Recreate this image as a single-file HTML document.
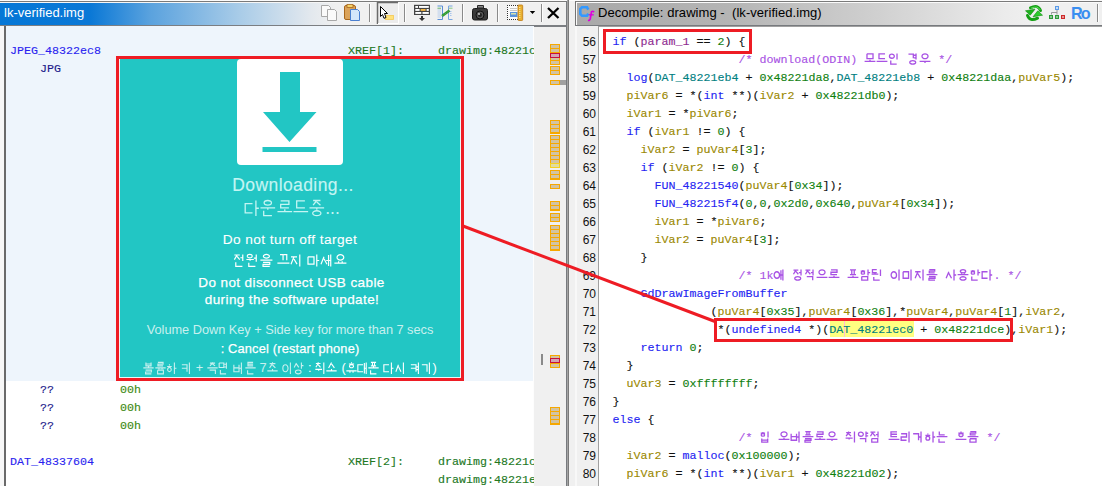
<!DOCTYPE html>
<html><head><meta charset="utf-8">
<style>
*{margin:0;padding:0;box-sizing:border-box}
html,body{width:1102px;height:486px;overflow:hidden;background:#f0f0f0;position:relative}
.a{position:absolute}
.m{font-family:"Liberation Mono",monospace;font-size:11.67px;line-height:18px;white-space:pre;-webkit-text-stroke:0.12px currentColor}
.s{font-family:"Liberation Sans",sans-serif}
.it{text-align:center;white-space:pre}
svg{display:block}
.kw{color:#2424f2}
.fn{color:#2424f2}
.vr{color:#9a8800}
.pm{color:#8e2a90}
.nm{color:#0f800f}
.gl{color:#00807f}
.cm{color:#a852e4}
</style></head><body>
<!-- LEFT PANEL -->
<div class="a" style="left:0;top:1px;width:567px;height:1px;background:#7a7a7a"></div>
<div class="a" style="left:0;top:0;width:1102px;height:1px;background:#fbfbfb"></div>
<div class="a" style="left:0;top:2px;width:566px;height:1px;background:#f6f6f6"></div>
<div class="a" style="left:0;top:3px;width:566px;height:22px;background:linear-gradient(to right,#0577d6 0px,#0a78d6 90px,#5aa2de 150px,#a9cce8 240px,#e2e8ee 310px,#f0f0f0 335px)"></div>
<div class="a" style="left:0;top:25px;width:567px;height:2px;background:#7b7e82"></div>
<div class="a s" style="left:4px;top:5px;font-size:13px;color:#fff;line-height:16px">lk-verified.img</div>
<svg class="a" style="left:310px;top:0" width="257" height="26" viewBox="310 0 257 26"><path d="M321.5 5.5 H328.5 L330.5 7.5 V16.5 H321.5 Z" fill="#fafafa" stroke="#a8a8a8"/><path d="M327.5 9.5 H334.5 L336.5 11.5 V20.5 H327.5 Z" fill="#fafafa" stroke="#a8a8a8"/><rect x="344.5" y="5.5" width="11" height="14" rx="1.5" fill="#dba35a" stroke="#a8671c"/><rect x="347" y="4.5" width="6" height="3" fill="#f6d36a" stroke="#a8671c" stroke-width="0.8"/><path d="M350.5 9.5 H357.5 L359.5 11.5 V20.5 H350.5 Z" fill="#d4e6fa" stroke="#4a7fd0"/><line x1="369.5" y1="4" x2="369.5" y2="22" stroke="#8a8a8a"/><line x1="370.5" y1="4" x2="370.5" y2="22" stroke="#fdfdfd"/><line x1="404.5" y1="4" x2="404.5" y2="22" stroke="#8a8a8a"/><line x1="405.5" y1="4" x2="405.5" y2="22" stroke="#fdfdfd"/><line x1="462.5" y1="4" x2="462.5" y2="22" stroke="#8a8a8a"/><line x1="463.5" y1="4" x2="463.5" y2="22" stroke="#fdfdfd"/><line x1="497.5" y1="4" x2="497.5" y2="22" stroke="#8a8a8a"/><line x1="498.5" y1="4" x2="498.5" y2="22" stroke="#fdfdfd"/><line x1="541.5" y1="4" x2="541.5" y2="22" stroke="#8a8a8a"/><line x1="542.5" y1="4" x2="542.5" y2="22" stroke="#fdfdfd"/><rect x="377" y="3" width="21" height="21" fill="#ececec"/><path d="M377.5 24 V2.5 H398" fill="none" stroke="#6a6a6a" stroke-width="1.5"/><path d="M378 23.5 H398.5 V3" fill="none" stroke="#ffffff"/><rect x="385.5" y="15.5" width="8" height="4" fill="#ffe27a" stroke="#f5c850" stroke-width="0.8"/><path d="M380.5 6.5 L387.5 13.5 L384.5 13.5 L386 17.5 L384 18.3 L382.5 14.5 L380.5 16.5 Z" fill="#fff" stroke="#000" stroke-width="1" stroke-linejoin="miter"/><rect x="414" y="4.8" width="16" height="10.2" fill="#444"/><rect x="415.3" y="6" width="2.7" height="1.9" fill="#fff"/><rect x="419" y="6" width="9.8" height="1.9" fill="#fff"/><rect x="415.3" y="9" width="4.3" height="1.9" fill="#fff"/><rect x="420.6" y="9" width="5" height="1.9" fill="#f7b844"/><rect x="426.6" y="9" width="2.2" height="1.9" fill="#fff"/><rect x="415.3" y="12" width="6" height="1.9" fill="#fff"/><rect x="422.5" y="12" width="6.3" height="1.9" fill="#fff"/><path d="M421 16 H423 V18 H425 L422 21 L419 18 H421 Z" fill="#333"/><path d="M437.5 6 H442.5 V19.5 H437.5" fill="none" stroke="#5b8fd6" stroke-width="1"/><path d="M452.5 6 H448.5 V19.5 H452.5" fill="none" stroke="#7aa6e0" stroke-width="1"/><line x1="437.5" y1="9" x2="441" y2="9" stroke="#a9c5ec" stroke-width="0.8"/><line x1="437.5" y1="11" x2="441" y2="11" stroke="#a9c5ec" stroke-width="0.8"/><line x1="437.5" y1="13" x2="441" y2="13" stroke="#a9c5ec" stroke-width="0.8"/><line x1="437.5" y1="15" x2="441" y2="15" stroke="#a9c5ec" stroke-width="0.8"/><line x1="437.5" y1="17" x2="441" y2="17" stroke="#a9c5ec" stroke-width="0.8"/><line x1="437.5" y1="8.2" x2="441" y2="8.2" stroke="#5fb55f" stroke-width="0.9"/><line x1="449" y1="8.2" x2="452.5" y2="8.2" stroke="#7cc47c" stroke-width="0.9"/><rect x="450" y="11" width="1.5" height="1" fill="#a9c5ec"/><rect x="450" y="13" width="1.5" height="1" fill="#a9c5ec"/><rect x="450" y="15" width="1.5" height="1" fill="#a9c5ec"/><line x1="442" y1="16" x2="449.5" y2="10.5" stroke="#2e962e" stroke-width="2.6"/><line x1="442" y1="16" x2="449.5" y2="10.5" stroke="#5cc05c" stroke-width="0.8" stroke-dasharray="1 1"/><rect x="472.5" y="8.5" width="15" height="11.5" rx="2" fill="#3a3a3a" stroke="#1a1a1a"/><rect x="477" y="5" width="7" height="4" rx="1" fill="#2a2a2a"/><rect x="478" y="6" width="5" height="1.5" fill="#8a8a8a"/><circle cx="480" cy="15" r="4" fill="#555" stroke="#111"/><circle cx="480" cy="15" r="2" fill="#222"/><circle cx="479" cy="14" r="0.9" fill="#ddd"/><rect x="507" y="5" width="11" height="15" fill="#fbfbfb"/><rect x="507" y="5" width="1" height="1" fill="#333"/><rect x="507" y="19" width="1" height="1" fill="#333"/><rect x="509" y="5" width="1" height="1" fill="#333"/><rect x="509" y="19" width="1" height="1" fill="#333"/><rect x="511" y="5" width="1" height="1" fill="#333"/><rect x="511" y="19" width="1" height="1" fill="#333"/><rect x="513" y="5" width="1" height="1" fill="#333"/><rect x="513" y="19" width="1" height="1" fill="#333"/><rect x="515" y="5" width="1" height="1" fill="#333"/><rect x="515" y="19" width="1" height="1" fill="#333"/><rect x="517" y="5" width="1" height="1" fill="#333"/><rect x="517" y="19" width="1" height="1" fill="#333"/><rect x="507" y="5" width="1" height="1" fill="#333"/><rect x="507" y="7" width="1" height="1" fill="#333"/><rect x="507" y="9" width="1" height="1" fill="#333"/><rect x="507" y="11" width="1" height="1" fill="#333"/><rect x="507" y="13" width="1" height="1" fill="#333"/><rect x="507" y="15" width="1" height="1" fill="#333"/><rect x="507" y="17" width="1" height="1" fill="#333"/><rect x="507" y="19" width="1" height="1" fill="#333"/><line x1="510" y1="8.5" x2="517" y2="8.5" stroke="#c8c8c8"/><line x1="510" y1="10.5" x2="517" y2="10.5" stroke="#c8c8c8"/><rect x="510" y="12" width="7.5" height="5" fill="#5a94dc"/><rect x="511" y="13" width="5" height="1.5" fill="#d8e4b0"/><rect x="518" y="5" width="4.7" height="15.5" rx="0.8" fill="#e8b030" stroke="#c07a10" stroke-width="0.8"/><rect x="519.3" y="7" width="1" height="1" fill="#fff3b0"/><rect x="519.3" y="9" width="1" height="1" fill="#fff3b0"/><rect x="519.3" y="11" width="1" height="1" fill="#fff3b0"/><rect x="519.3" y="13" width="1" height="1" fill="#fff3b0"/><rect x="519.3" y="15" width="1" height="1" fill="#fff3b0"/><rect x="519.3" y="17" width="1" height="1" fill="#fff3b0"/><path d="M529.8 11 H535.2 L532.5 14 Z" fill="#000"/><path d="M548 8 L558.5 18 M558.5 8 L548 18" stroke="#000" stroke-width="2.3"/></svg>

<div class="a" style="left:0;top:26px;width:4px;height:460px;background:#f7f7f7"></div>
<div class="a" style="left:4px;top:26px;width:2px;height:460px;background:#6a6a6a"></div>
<div class="a" style="left:6px;top:26px;width:528px;height:460px;background:#fff"></div>
<div class="a" style="left:6px;top:26px;width:528px;height:355px;background:#eef5fc"></div>
<div class="a" style="left:533px;top:27px;width:1px;height:459px;background:#fdfdfd"></div>
<div class="a" style="left:534px;top:27px;width:32px;height:459px;background:#f0f0f0"></div>
<div class="a" style="left:566px;top:1px;width:1px;height:485px;background:#777a7e"></div>
<div class="a" style="left:567px;top:0;width:1px;height:486px;background:#a4a4a4"></div>
<div class="a" style="left:568px;top:0;width:1px;height:486px;background:#7a7a7a"></div>
<div class="a" style="left:550px;top:44px;width:10px;height:21px;background:#f6a800"></div><div class="a" style="left:551px;top:45px;width:8px;height:3px;background:#d3c4a2"></div><div class="a" style="left:551px;top:49px;width:8px;height:3px;background:#d3c4a2"></div><div class="a" style="left:551px;top:53px;width:8px;height:3px;background:#d3c4a2"></div><div class="a" style="left:551px;top:57px;width:8px;height:3px;background:#d3c4a2"></div><div class="a" style="left:551px;top:61px;width:8px;height:3px;background:#d3c4a2"></div><div class="a" style="left:550px;top:66px;width:10px;height:9px;background:#f6a800"></div><div class="a" style="left:551px;top:67px;width:8px;height:3px;background:#d3c4a2"></div><div class="a" style="left:551px;top:71px;width:8px;height:3px;background:#d3c4a2"></div><div class="a" style="left:550px;top:80px;width:10px;height:5px;background:#f6a800"></div><div class="a" style="left:551px;top:81px;width:8px;height:3px;background:#d3c4a2"></div><div class="a" style="left:550px;top:120px;width:10px;height:14px;background:#f6a800"></div><div class="a" style="left:551px;top:121px;width:8px;height:3px;background:#d3c4a2"></div><div class="a" style="left:551px;top:125px;width:8px;height:3px;background:#d3c4a2"></div><div class="a" style="left:551px;top:129px;width:8px;height:3px;background:#d3c4a2"></div><div class="a" style="left:550px;top:135px;width:10px;height:33px;background:#f6a800"></div><div class="a" style="left:551px;top:136px;width:8px;height:3px;background:#d3c4a2"></div><div class="a" style="left:551px;top:140px;width:8px;height:3px;background:#d3c4a2"></div><div class="a" style="left:551px;top:144px;width:8px;height:3px;background:#d3c4a2"></div><div class="a" style="left:551px;top:148px;width:8px;height:3px;background:#d3c4a2"></div><div class="a" style="left:551px;top:152px;width:8px;height:3px;background:#d3c4a2"></div><div class="a" style="left:551px;top:156px;width:8px;height:3px;background:#d3c4a2"></div><div class="a" style="left:551px;top:160px;width:8px;height:3px;background:#d3c4a2"></div><div class="a" style="left:551px;top:164px;width:8px;height:3px;background:#d3c4a2"></div><div class="a" style="left:550px;top:170px;width:10px;height:10px;background:#f6a800"></div><div class="a" style="left:551px;top:171px;width:8px;height:3px;background:#d3c4a2"></div><div class="a" style="left:551px;top:175px;width:8px;height:3px;background:#d3c4a2"></div><div class="a" style="left:550px;top:184px;width:10px;height:5px;background:#f6a800"></div><div class="a" style="left:551px;top:185px;width:8px;height:3px;background:#d3c4a2"></div><div class="a" style="left:550px;top:201px;width:10px;height:10px;background:#f6a800"></div><div class="a" style="left:551px;top:202px;width:8px;height:3px;background:#d3c4a2"></div><div class="a" style="left:551px;top:206px;width:8px;height:3px;background:#d3c4a2"></div><div class="a" style="left:550px;top:213px;width:10px;height:9px;background:#f6a800"></div><div class="a" style="left:551px;top:214px;width:8px;height:3px;background:#d3c4a2"></div><div class="a" style="left:551px;top:218px;width:8px;height:3px;background:#d3c4a2"></div><div class="a" style="left:550px;top:225px;width:10px;height:26px;background:#f6a800"></div><div class="a" style="left:551px;top:226px;width:8px;height:3px;background:#d3c4a2"></div><div class="a" style="left:551px;top:230px;width:8px;height:3px;background:#d3c4a2"></div><div class="a" style="left:551px;top:234px;width:8px;height:3px;background:#d3c4a2"></div><div class="a" style="left:551px;top:238px;width:8px;height:3px;background:#d3c4a2"></div><div class="a" style="left:551px;top:242px;width:8px;height:3px;background:#d3c4a2"></div><div class="a" style="left:551px;top:246px;width:8px;height:3px;background:#d3c4a2"></div><div class="a" style="left:550px;top:355px;width:10px;height:13px;background:#f6a800"></div><div class="a" style="left:551px;top:356px;width:8px;height:3px;background:#d3c4a2"></div><div class="a" style="left:551px;top:360px;width:8px;height:3px;background:#d3c4a2"></div><div class="a" style="left:551px;top:364px;width:8px;height:3px;background:#d3c4a2"></div><div class="a" style="left:550px;top:407px;width:10px;height:18px;background:#f6a800"></div><div class="a" style="left:551px;top:408px;width:8px;height:3px;background:#d3c4a2"></div><div class="a" style="left:551px;top:412px;width:8px;height:3px;background:#d3c4a2"></div><div class="a" style="left:551px;top:416px;width:8px;height:3px;background:#d3c4a2"></div><div class="a" style="left:551px;top:420px;width:8px;height:3px;background:#d3c4a2"></div><div class="a" style="left:550px;top:53px;width:10px;height:5px;background:#c8103c"></div><div class="a" style="left:551px;top:54px;width:8px;height:3px;background:#d4a4b4"></div><div class="a" style="left:550px;top:358px;width:10px;height:5px;background:#c8103c"></div><div class="a" style="left:551px;top:359px;width:8px;height:3px;background:#d4a4b4"></div><div class="a" style="left:550px;top:163px;width:10px;height:5px;background:#f5d020"></div><div class="a" style="left:551px;top:164px;width:8px;height:3px;background:#e0dca0"></div><div class="a" style="left:560px;top:80px;width:6px;height:5px;background:#a0a0a0"></div><div class="a" style="left:541px;top:354px;width:2px;height:11px;background:#8a8a8a"></div>
<div class="a m" style="left:10px;top:42px;color:#2a1ff0">JPEG_48322ec8</div>
<div class="a m" style="left:40px;top:60px;color:#1a1a8a">JPG</div>
<div class="a m" style="left:348px;top:42px;color:#22781e">XREF[1]:</div>
<div class="a m" style="left:438px;top:42px;width:96px;overflow:hidden;color:#22781e">drawimg:48221c</div>
<div class="a m" style="left:40px;top:381px;color:#1a1a8a">??</div>
<div class="a m" style="left:40px;top:399px;color:#1a1a8a">??</div>
<div class="a m" style="left:40px;top:417px;color:#1a1a8a">??</div>
<div class="a m" style="left:120px;top:381px;color:#3c8a10">00h</div>
<div class="a m" style="left:120px;top:399px;color:#3c8a10">00h</div>
<div class="a m" style="left:120px;top:417px;color:#3c8a10">00h</div>
<div class="a m" style="left:10px;top:453px;color:#2a1ff0">DAT_48337604</div>
<div class="a m" style="left:348px;top:453px;color:#22781e">XREF[2]:</div>
<div class="a m" style="left:438px;top:453px;width:96px;overflow:hidden;color:#22781e">drawimg:48221c</div>
<div class="a m" style="left:438px;top:471px;width:96px;overflow:hidden;color:#22781e">drawimg:48221e</div>
<!-- IMAGE -->
<div class="a" style="left:116px;top:56px;width:348px;height:325px;background:#ee1c24"></div>
<div class="a" style="left:119px;top:59px;width:342px;height:319px;background:#e8f6f6"></div>
<div class="a" style="left:120px;top:59px;width:340px;height:318px;background:#22c6c4"></div>
<div class="a" style="left:237px;top:59px;width:106px;height:106px;background:#fff;border-radius:4px"></div>
<svg class="a" style="left:237px;top:59px" width="106" height="106" viewBox="0 0 106 106">
<path d="M43 13 H63 V53 H79.5 L52.5 83 L26 53 H43 Z" fill="#22c6c4"/>
<rect x="25.5" y="88" width="54" height="5" fill="#22c6c4"/>
</svg>
<div class="a s it" style="left:123px;top:175px;width:340px;font-size:17.5px;line-height:20px;color:#c4f5f3;letter-spacing:0.4px;-webkit-text-stroke:0.15px #c4f5f3">Downloading...</div>
<div class="a s it" style="left:122px;top:198px;width:340px;font-size:17.5px;line-height:20px;color:#c4f5f3;letter-spacing:0px"><svg width="15.6" height="16.5" style="display:inline-block;vertical-align:-2.5px;overflow:visible"><path d="M8.53 3.60 L1.20 3.60 L1.20 12.90 L8.53 12.90 M11.91 0.49 L11.91 16.00 M11.91 8.25 L14.84 8.25" fill="none" stroke="#c4f5f3" stroke-width="1.3"/></svg><span style="display:inline-block;width:0.6px"></span><svg width="15.6" height="16.5" style="display:inline-block;vertical-align:-2.5px;overflow:visible"><path d="M4.13 2.82 A3.67 2.33 0 1 0 11.47 2.82 A3.67 2.33 0 1 0 4.13 2.82 M0.47 7.78 L15.13 7.78 M7.80 7.78 L7.80 9.65 M3.69 10.73 L3.69 15.69 L11.91 15.69" fill="none" stroke="#c4f5f3" stroke-width="1.3"/></svg><span style="display:inline-block;width:0.6px"></span><svg width="15.6" height="16.5" style="display:inline-block;vertical-align:-2.5px;overflow:visible"><path d="M3.69 0.81 L11.91 0.81 L11.91 4.29 L3.69 4.29 L3.69 7.78 L11.91 7.78 M0.47 11.66 L15.13 11.66 M7.80 9.18 L7.80 11.66" fill="none" stroke="#c4f5f3" stroke-width="1.3"/></svg><span style="display:inline-block;width:0.6px"></span><svg width="15.6" height="16.5" style="display:inline-block;vertical-align:-2.5px;overflow:visible"><path d="M11.91 0.81 L3.69 0.81 L3.69 7.78 L11.91 7.78 M0.47 11.66 L15.13 11.66" fill="none" stroke="#c4f5f3" stroke-width="1.3"/></svg><span style="display:inline-block;width:0.6px"></span><svg width="15.6" height="16.5" style="display:inline-block;vertical-align:-2.5px;overflow:visible"><path d="M4.13 0.49 L11.47 0.49 M7.80 0.49 L4.13 5.15 M7.80 1.89 L11.47 5.15 M0.47 7.78 L15.13 7.78 M7.80 7.78 L7.80 9.65 M3.69 13.21 A4.11 2.48 0 1 0 11.91 13.21 A4.11 2.48 0 1 0 3.69 13.21" fill="none" stroke="#c4f5f3" stroke-width="1.3"/></svg><span style="display:inline-block;width:0.6px"></span>...</div>
<div class="a s it" style="left:120px;top:231px;width:340px;font-size:13.7px;line-height:17px;color:#ffffff;letter-spacing:0.42px;-webkit-text-stroke:0.1px #fff">Do not turn off target</div>
<div class="a s it" style="left:120px;top:251px;width:340px;font-size:13.7px;line-height:17px;color:#ffffff;letter-spacing:0px"><svg width="12.8" height="13" style="display:inline-block;vertical-align:-2.5px;overflow:visible"><path d="M1.35 1.00 L6.76 1.00 M4.05 1.00 L1.35 5.64 M4.05 2.39 L6.76 5.64 M9.77 0.39 L9.77 7.11 M7.36 3.75 L9.77 3.75 M2.79 8.33 L2.79 12.37 L9.41 12.37" fill="none" stroke="#ffffff" stroke-width="1.2"/></svg><span style="display:inline-block;width:0.5px"></span><svg width="12.8" height="13" style="display:inline-block;vertical-align:-2.5px;overflow:visible"><path d="M1.35 2.10 A2.41 1.71 0 1 0 6.16 2.10 A2.41 1.71 0 1 0 1.35 2.10 M0.38 5.52 L7.84 5.52 M4.11 5.52 L4.11 6.74 M10.25 0.39 L10.25 7.72 M7.84 4.06 L10.25 4.06 M2.79 8.70 L2.79 12.37 L9.41 12.37" fill="none" stroke="#ffffff" stroke-width="1.2"/></svg><span style="display:inline-block;width:0.5px"></span><svg width="12.8" height="13" style="display:inline-block;vertical-align:-2.5px;overflow:visible"><path d="M3.39 2.22 A3.01 1.83 0 1 0 9.41 2.22 A3.01 1.83 0 1 0 3.39 2.22 M0.38 6.13 L12.42 6.13 M3.03 8.46 L9.77 8.46 L9.77 10.41 L3.03 10.41 L3.03 12.37 L9.77 12.37" fill="none" stroke="#ffffff" stroke-width="1.2"/></svg><span style="display:inline-block;width:0.5px"></span> <svg width="12.8" height="13" style="display:inline-block;vertical-align:-2.5px;overflow:visible"><path d="M3.03 0.63 L6.06 0.63 L6.06 6.13 M6.74 0.63 L9.77 0.63 L9.77 6.13 M0.38 9.19 L12.42 9.19" fill="none" stroke="#ffffff" stroke-width="1.2"/></svg><span style="display:inline-block;width:0.5px"></span><svg width="12.8" height="13" style="display:inline-block;vertical-align:-2.5px;overflow:visible"><path d="M0.99 2.83 L7.00 2.83 M3.99 2.83 L0.99 10.17 M3.99 5.03 L7.00 10.17 M9.77 0.39 L9.77 12.61" fill="none" stroke="#ffffff" stroke-width="1.2"/></svg><span style="display:inline-block;width:0.5px"></span> <svg width="12.8" height="13" style="display:inline-block;vertical-align:-2.5px;overflow:visible"><path d="M0.99 2.83 L7.00 2.83 L7.00 10.17 L0.99 10.17 L0.99 2.83 M9.77 0.39 L9.77 12.61 M9.77 6.50 L12.18 6.50" fill="none" stroke="#ffffff" stroke-width="1.2"/></svg><span style="display:inline-block;width:0.5px"></span><svg width="12.8" height="13" style="display:inline-block;vertical-align:-2.5px;overflow:visible"><path d="M3.99 2.83 L0.99 10.17 M3.99 4.67 L7.00 10.17 M8.57 1.00 L8.57 12.00 M10.73 0.39 L10.73 12.61 M6.16 6.50 L8.57 6.50 M8.57 6.50 L10.73 6.50" fill="none" stroke="#ffffff" stroke-width="1.2"/></svg><span style="display:inline-block;width:0.5px"></span><svg width="12.8" height="13" style="display:inline-block;vertical-align:-2.5px;overflow:visible"><path d="M3.03 3.38 A3.37 2.75 0 1 0 9.77 3.38 A3.37 2.75 0 1 0 3.03 3.38 M0.38 9.19 L12.42 9.19 M4.60 7.23 L4.60 9.19 M8.20 7.23 L8.20 9.19" fill="none" stroke="#ffffff" stroke-width="1.2"/></svg><span style="display:inline-block;width:0.5px"></span></div>
<div class="a s it" style="left:121.5px;top:274px;width:340px;font-size:13.5px;line-height:17px;color:#ffffff;letter-spacing:0.4px;-webkit-text-stroke:0.25px #fff">Do not disconnect USB cable</div>
<div class="a s it" style="left:122px;top:291px;width:340px;font-size:13.5px;line-height:17px;color:#ffffff;letter-spacing:0.4px;-webkit-text-stroke:0.25px #fff">during the software update!</div>
<div class="a s it" style="left:120px;top:321px;width:340px;font-size:12.8px;line-height:17px;color:#c8f0ef;letter-spacing:-0.04px">Volume Down Key + Side key for more than 7 secs</div>
<div class="a s it" style="left:120px;top:340px;width:340px;font-size:12.8px;line-height:17px;color:#ffffff;letter-spacing:0.18px;-webkit-text-stroke:0.25px #fff">: Cancel (restart phone)</div>
<div class="a s it" style="left:120px;top:359px;width:340px;font-size:12.8px;line-height:17px;color:#ffffff;letter-spacing:0px"><span style="color:#c8f0ef"><svg width="11" height="12.5" style="display:inline-block;vertical-align:-2.5px;overflow:visible"><path d="M2.92 0.38 L2.92 3.90 L8.08 3.90 L8.08 0.38 M2.92 1.96 L8.08 1.96 M0.33 5.90 L10.67 5.90 M5.50 4.49 L5.50 5.90 M2.60 8.13 L8.40 8.13 L8.40 10.01 L2.60 10.01 L2.60 11.89 L8.40 11.89" fill="none" stroke="#c8f0ef" stroke-width="1.1"/></svg><span style="display:inline-block;width:0.4px"></span><svg width="11" height="12.5" style="display:inline-block;vertical-align:-2.5px;overflow:visible"><path d="M2.92 0.38 L8.08 0.38 L8.08 2.14 L2.92 2.14 L2.92 3.90 L8.08 3.90 M0.33 5.90 L10.67 5.90 M3.95 5.90 L3.95 7.31 M7.05 5.90 L7.05 7.31 M2.60 8.13 L8.40 8.13 L8.40 11.89 L2.60 11.89 L2.60 8.13" fill="none" stroke="#c8f0ef" stroke-width="1.1"/></svg><span style="display:inline-block;width:0.4px"></span><svg width="11" height="12.5" style="display:inline-block;vertical-align:-2.5px;overflow:visible"><path d="M3.43 2.37 L3.43 3.57 M1.11 4.49 L5.76 4.49 M1.62 7.52 A1.81 2.11 0 1 0 5.24 7.52 A1.81 2.11 0 1 0 1.62 7.52 M8.40 0.38 L8.40 12.12 M8.40 6.25 L10.46 6.25" fill="none" stroke="#c8f0ef" stroke-width="1.1"/></svg><span style="display:inline-block;width:0.4px"></span> <svg width="11" height="12.5" style="display:inline-block;vertical-align:-2.5px;overflow:visible"><path d="M0.85 2.73 L6.02 2.73 L6.02 9.78 M0.85 6.25 L6.02 6.25 M8.40 0.38 L8.40 12.12" fill="none" stroke="#c8f0ef" stroke-width="1.1"/></svg><span style="display:inline-block;width:0.4px"></span> + <svg width="11" height="12.5" style="display:inline-block;vertical-align:-2.5px;overflow:visible"><path d="M5.50 0.20 L5.50 0.80 M2.92 1.08 L8.08 1.08 M5.50 1.08 L2.92 3.90 M5.50 1.96 L8.08 3.90 M0.33 5.90 L10.67 5.90 M2.60 8.13 L8.40 8.13 L8.40 11.89" fill="none" stroke="#c8f0ef" stroke-width="1.1"/></svg><span style="display:inline-block;width:0.4px"></span><svg width="11" height="12.5" style="display:inline-block;vertical-align:-2.5px;overflow:visible"><path d="M1.16 0.96 L5.81 0.96 L5.81 5.43 L1.16 5.43 L1.16 0.96 M8.40 0.38 L8.40 6.84 M6.33 2.20 L8.40 2.20 M6.33 5.02 L8.40 5.02 M2.40 8.01 L2.40 11.89 L8.08 11.89" fill="none" stroke="#c8f0ef" stroke-width="1.1"/></svg><span style="display:inline-block;width:0.4px"></span> <svg width="11" height="12.5" style="display:inline-block;vertical-align:-2.5px;overflow:visible"><path d="M0.85 2.73 L0.85 9.78 L6.02 9.78 L6.02 2.73 M0.85 5.90 L6.02 5.90 M8.40 0.38 L8.40 12.12 M6.33 6.25 L8.40 6.25" fill="none" stroke="#c8f0ef" stroke-width="1.1"/></svg><span style="display:inline-block;width:0.4px"></span><svg width="11" height="12.5" style="display:inline-block;vertical-align:-2.5px;overflow:visible"><path d="M8.08 0.38 L2.92 0.38 L2.92 3.90 L8.08 3.90 M2.92 2.14 L8.08 2.14 M0.33 5.90 L10.67 5.90 M2.60 8.13 L2.60 11.89 L8.40 11.89" fill="none" stroke="#c8f0ef" stroke-width="1.1"/></svg><span style="display:inline-block;width:0.4px"></span> 7<svg width="11" height="12.5" style="display:inline-block;vertical-align:-2.5px;overflow:visible"><path d="M5.50 0.35 L5.50 1.24 M2.60 1.67 L8.40 1.67 M5.50 1.67 L2.60 5.90 M5.50 2.99 L8.40 5.90 M0.33 8.83 L10.67 8.83 M5.50 6.95 L5.50 8.83" fill="none" stroke="#c8f0ef" stroke-width="1.1"/></svg><span style="display:inline-block;width:0.4px"></span> <svg width="11" height="12.5" style="display:inline-block;vertical-align:-2.5px;overflow:visible"><path d="M0.85 6.25 A2.58 3.52 0 1 0 6.02 6.25 A2.58 3.52 0 1 0 0.85 6.25 M8.40 0.38 L8.40 12.12" fill="none" stroke="#c8f0ef" stroke-width="1.1"/></svg><span style="display:inline-block;width:0.4px"></span><svg width="11" height="12.5" style="display:inline-block;vertical-align:-2.5px;overflow:visible"><path d="M3.48 0.96 L1.16 5.43 M3.48 2.08 L5.81 5.43 M8.40 0.38 L8.40 6.84 M8.40 3.61 L10.46 3.61 M2.40 9.95 A2.84 1.94 0 1 0 8.09 9.95 A2.84 1.94 0 1 0 2.40 9.95" fill="none" stroke="#c8f0ef" stroke-width="1.1"/></svg><span style="display:inline-block;width:0.4px"></span></span> : <svg width="11" height="12.5" style="display:inline-block;vertical-align:-2.5px;overflow:visible"><path d="M3.17 0.37 L3.17 1.17 M0.85 1.55 L5.50 1.55 M3.17 1.55 L0.85 5.31 M3.17 2.73 L5.50 5.31 M0.33 7.42 L7.05 7.42 M3.69 7.42 L3.69 8.83 M8.81 0.38 L8.81 12.12" fill="none" stroke="#ffffff" stroke-width="1.1"/></svg><span style="display:inline-block;width:0.4px"></span><svg width="11" height="12.5" style="display:inline-block;vertical-align:-2.5px;overflow:visible"><path d="M5.50 0.61 L2.60 5.90 M5.50 1.93 L8.40 5.90 M0.33 8.83 L10.67 8.83 M5.50 6.95 L5.50 8.83" fill="none" stroke="#ffffff" stroke-width="1.1"/></svg><span style="display:inline-block;width:0.4px"></span> (<svg width="11" height="12.5" style="display:inline-block;vertical-align:-2.5px;overflow:visible"><path d="M5.50 0.35 L5.50 1.24 M2.89 1.93 L8.11 1.93 M3.47 4.21 A2.03 1.59 0 1 0 7.53 4.21 A2.03 1.59 0 1 0 3.47 4.21 M0.33 8.83 L10.67 8.83 M3.95 8.83 L3.95 10.71 M7.05 8.83 L7.05 10.71" fill="none" stroke="#ffffff" stroke-width="1.1"/></svg><span style="display:inline-block;width:0.4px"></span><svg width="11" height="12.5" style="display:inline-block;vertical-align:-2.5px;overflow:visible"><path d="M6.02 2.73 L0.85 2.73 L0.85 9.78 L6.02 9.78 M7.36 0.96 L7.36 11.54 M9.22 0.38 L9.22 12.12 M7.36 6.25 L9.22 6.25" fill="none" stroke="#ffffff" stroke-width="1.1"/></svg><span style="display:inline-block;width:0.4px"></span><svg width="11" height="12.5" style="display:inline-block;vertical-align:-2.5px;overflow:visible"><path d="M2.92 0.38 L8.08 0.38 M4.47 0.38 L4.47 3.90 M6.53 0.38 L6.53 3.90 M2.92 3.90 L8.08 3.90 M0.33 5.90 L10.67 5.90 M5.50 4.49 L5.50 5.90 M2.60 8.13 L2.60 11.89 L8.40 11.89" fill="none" stroke="#ffffff" stroke-width="1.1"/></svg><span style="display:inline-block;width:0.4px"></span> <svg width="11" height="12.5" style="display:inline-block;vertical-align:-2.5px;overflow:visible"><path d="M6.02 2.73 L0.85 2.73 L0.85 9.78 L6.02 9.78 M8.40 0.38 L8.40 12.12 M8.40 6.25 L10.46 6.25" fill="none" stroke="#ffffff" stroke-width="1.1"/></svg><span style="display:inline-block;width:0.4px"></span><svg width="11" height="12.5" style="display:inline-block;vertical-align:-2.5px;overflow:visible"><path d="M3.43 2.73 L0.85 9.78 M3.43 4.49 L6.02 9.78 M8.40 0.38 L8.40 12.12" fill="none" stroke="#ffffff" stroke-width="1.1"/></svg><span style="display:inline-block;width:0.4px"></span> <svg width="11" height="12.5" style="display:inline-block;vertical-align:-2.5px;overflow:visible"><path d="M0.85 2.73 L6.02 2.73 L6.02 9.78 M0.85 6.25 L6.02 6.25 M8.40 0.38 L8.40 12.12 M6.33 4.84 L8.40 4.84 M6.33 7.66 L8.40 7.66" fill="none" stroke="#ffffff" stroke-width="1.1"/></svg><span style="display:inline-block;width:0.4px"></span><svg width="11" height="12.5" style="display:inline-block;vertical-align:-2.5px;overflow:visible"><path d="M0.85 2.73 L6.02 2.73 L6.02 9.78 M8.40 0.38 L8.40 12.12" fill="none" stroke="#ffffff" stroke-width="1.1"/></svg><span style="display:inline-block;width:0.4px"></span>)</div>

<!-- RIGHT PANEL -->
<div class="a" style="left:575px;top:1px;width:527px;height:1px;background:#7a7a7a"></div>
<div class="a" style="left:575px;top:1px;width:1px;height:25px;background:#747474"></div>
<div class="a" style="left:576px;top:2px;width:526px;height:1px;background:#fafafa"></div>
<div class="a" style="left:576px;top:2px;width:1px;height:23px;background:#fafafa"></div>
<div class="a" style="left:577px;top:3px;width:525px;height:22px;background:linear-gradient(to right,#a9a9a9 0px,#b4b4b4 150px,#d0d0d0 300px,#ececec 430px,#f0f0f0 460px)"></div>
<div class="a" style="left:575px;top:25px;width:527px;height:1px;background:#777a7e"></div>
<div class="a s" style="left:598px;top:5px;font-size:13px;color:#000;line-height:16px;letter-spacing:0.05px">Decompile: drawimg -&nbsp; (lk-verified.img)</div>
<svg class="a" style="left:576px;top:0" width="526" height="26" viewBox="576 0 526 26"><path d="M588.3 9.6 L587 7.3 H582 L580.3 9 V14 L582 15.8 H587 L588.3 13.6" fill="none" stroke="#3399ff" stroke-width="2.6"/><path d="M594 12.3 Q593 10.6 591.6 11.6 L590.2 19 Q589.6 20.8 588 20.2" fill="none" stroke="#dd00dd" stroke-width="1.7"/><line x1="588.8" y1="14.8" x2="593.8" y2="14.8" stroke="#dd00dd" stroke-width="1.3"/><path d="M1040.5 10.5 Q1038 4 1030.5 7.8" fill="none" stroke="#16a016" stroke-width="3" stroke-linecap="round"/><path d="M1040.2 10 Q1037.8 5.2 1031 8.2" fill="none" stroke="#5ee05e" stroke-width="1"/><path d="M1025.5 10.8 L1035 9.2 L1030.2 15.2 Z" fill="#1eb41e" stroke="#0e8a0e" stroke-width="0.6" stroke-linejoin="round"/><path d="M1027.5 15.5 Q1030 22 1037.5 18.2" fill="none" stroke="#16a016" stroke-width="3" stroke-linecap="round"/><path d="M1042.5 15.2 L1033 16.8 L1037.8 10.8 Z" fill="#2ccc2c" stroke="#0e8a0e" stroke-width="0.6" stroke-linejoin="round"/><path d="M1057 10 V14.5 M1051.5 14.5 V12.5 H1057" fill="none" stroke="#9a9a9a" stroke-width="1"/><rect x="1055" y="6" width="4" height="4" fill="#5a9ae6"/><rect x="1056" y="7" width="2" height="2" fill="#c8dcf6"/><rect x="1049" y="15" width="4" height="4" fill="#2f9a3a"/><rect x="1050" y="16" width="2" height="2" fill="#88c890"/><rect x="1055" y="15" width="4" height="4" fill="#2f9a3a"/><rect x="1056" y="16" width="2" height="2" fill="#88c890"/><rect x="1061" y="15" width="4" height="4" fill="#cc2a2a"/><rect x="1062" y="16" width="2" height="2" fill="#e89090"/><line x1="1097.5" y1="4" x2="1097.5" y2="22" stroke="#8a8a8a"/><line x1="1098.5" y1="4" x2="1098.5" y2="22" stroke="#fdfdfd"/></svg>
<div class="a s" style="left:1071px;top:3px;font-size:16.2px;line-height:20px;font-weight:bold;color:#3a8ef0;letter-spacing:-1.9px">Ro</div>

<div class="a" style="left:575px;top:26px;width:2px;height:460px;background:#f8f8f8"></div>
<div class="a" style="left:577px;top:26px;width:21px;height:460px;background:#f0f0f0"></div>
<div class="a" style="left:598px;top:26px;width:1px;height:460px;background:#a0a0a0"></div>
<div class="a" style="left:599px;top:26px;width:503px;height:460px;background:#fff"></div>
<div class="a" style="left:598px;top:26px;width:504px;height:1px;background:#a0a0a0"></div>
<div class="a" style="left:830px;top:321px;width:84px;height:16px;background:#ffff80"></div>
<div class="a" style="left:844px;top:321px;width:1px;height:16px;background:#ffc0d0"></div>
<div class="a s" id="nums" style="left:576px;top:33px;width:20px;text-align:right;font-size:12px;line-height:18px;color:#111"><div>56</div><div>57</div><div>58</div><div>59</div><div>60</div><div>61</div><div>62</div><div>63</div><div>64</div><div>65</div><div>66</div><div>67</div><div>68</div><div>69</div><div>70</div><div>71</div><div>72</div><div>73</div><div>74</div><div>75</div><div>76</div><div>77</div><div>78</div><div>79</div><div>80</div></div>
<div class="a m" id="code" style="left:598.5px;top:33px;color:#111"><div>  <span class="kw">if</span> (<span class="pm">param_1</span> == <span class="nm">2</span>) {</div><div>                    <span class="cm">/* download(ODIN) <svg width="12" height="12" style="display:inline-block;vertical-align:-2px;overflow:visible"><path d="M2.98 0.82 L9.02 0.82 L9.02 5.68 L2.98 5.68 L2.98 0.82 M0.60 8.38 L11.40 8.38 M6.00 6.65 L6.00 8.38" fill="none" stroke="#a852e4" stroke-width="1.3"/></svg><svg width="12" height="12" style="display:inline-block;vertical-align:-2px;overflow:visible"><path d="M9.02 0.82 L2.98 0.82 L2.98 5.68 L9.02 5.68 M0.60 8.38 L11.40 8.38" fill="none" stroke="#a852e4" stroke-width="1.3"/></svg><svg width="12" height="12" style="display:inline-block;vertical-align:-2px;overflow:visible"><path d="M1.46 3.19 A2.43 2.05 0 1 0 6.32 3.19 A2.43 2.05 0 1 0 1.46 3.19 M9.02 0.60 L9.02 6.54 M2.76 7.62 L2.76 11.18 L8.70 11.18" fill="none" stroke="#a852e4" stroke-width="1.3"/></svg> <svg width="12" height="12" style="display:inline-block;vertical-align:-2px;overflow:visible"><path d="M1.46 1.14 L6.32 1.14 L6.32 5.24 M9.02 0.60 L9.02 6.54 M6.86 2.27 L9.02 2.27 M6.86 4.87 L9.02 4.87 M2.76 9.40 A2.97 1.78 0 1 0 8.70 9.40 A2.97 1.78 0 1 0 2.76 9.40" fill="none" stroke="#a852e4" stroke-width="1.3"/></svg><svg width="12" height="12" style="display:inline-block;vertical-align:-2px;overflow:visible"><path d="M2.98 3.25 A3.02 2.43 0 1 0 9.02 3.25 A3.02 2.43 0 1 0 2.98 3.25 M0.60 8.38 L11.40 8.38 M6.00 8.38 L6.00 10.10" fill="none" stroke="#a852e4" stroke-width="1.3"/></svg> */</span></div><div>    <span class="fn">log</span>(<span class="gl">DAT_48221eb4</span> + <span class="nm">0x48221da8</span>,<span class="gl">DAT_48221eb8</span> + <span class="nm">0x48221daa</span>,<span class="vr">puVar5</span>);</div><div>    <span class="vr">piVar6</span> = *(<span class="kw">int</span> **)(<span class="vr">iVar2</span> + <span class="nm">0x48221db0</span>);</div><div>    <span class="vr">iVar1</span> = *<span class="vr">piVar6</span>;</div><div>    <span class="kw">if</span> (<span class="vr">iVar1</span> != <span class="nm">0</span>) {</div><div>      <span class="vr">iVar2</span> = <span class="vr">puVar4</span>[<span class="nm">3</span>];</div><div>      <span class="kw">if</span> (<span class="vr">iVar2</span> != <span class="nm">0</span>) {</div><div>        <span class="fn">FUN_48221540</span>(<span class="vr">puVar4</span>[<span class="nm">0x34</span>]);</div><div>        <span class="fn">FUN_482215f4</span>(<span class="nm">0</span>,<span class="nm">0</span>,<span class="nm">0x2d0</span>,<span class="nm">0x640</span>,<span class="vr">puVar4</span>[<span class="nm">0x34</span>]);</div><div>        <span class="vr">iVar1</span> = *<span class="vr">piVar6</span>;</div><div>        <span class="vr">iVar2</span> = <span class="vr">puVar4</span>[<span class="nm">3</span>];</div><div>      }</div><div>                    <span class="cm">/* 1k<svg width="12" height="12" style="display:inline-block;vertical-align:-2px;overflow:visible"><path d="M1.14 6.00 A2.70 3.24 0 1 0 6.54 6.00 A2.70 3.24 0 1 0 1.14 6.00 M7.94 1.14 L7.94 10.86 M9.89 0.60 L9.89 11.40 M5.78 6.00 L7.94 6.00 M7.94 6.00 L9.89 6.00" fill="none" stroke="#a852e4" stroke-width="1.3"/></svg> <svg width="12" height="12" style="display:inline-block;vertical-align:-2px;overflow:visible"><path d="M1.46 1.14 L6.32 1.14 M3.89 1.14 L1.46 5.24 M3.89 2.37 L6.32 5.24 M9.02 0.60 L9.02 6.54 M6.86 3.57 L9.02 3.57 M2.76 9.40 A2.97 1.78 0 1 0 8.70 9.40 A2.97 1.78 0 1 0 2.76 9.40" fill="none" stroke="#a852e4" stroke-width="1.3"/></svg><svg width="12" height="12" style="display:inline-block;vertical-align:-2px;overflow:visible"><path d="M1.46 1.14 L6.32 1.14 M3.89 1.14 L1.46 5.24 M3.89 2.37 L6.32 5.24 M9.02 0.60 L9.02 6.54 M6.86 3.57 L9.02 3.57 M2.76 7.62 L8.70 7.62 L8.70 11.18" fill="none" stroke="#a852e4" stroke-width="1.3"/></svg><svg width="12" height="12" style="display:inline-block;vertical-align:-2px;overflow:visible"><path d="M2.98 3.25 A3.02 2.43 0 1 0 9.02 3.25 A3.02 2.43 0 1 0 2.98 3.25 M0.60 8.38 L11.40 8.38" fill="none" stroke="#a852e4" stroke-width="1.3"/></svg><svg width="12" height="12" style="display:inline-block;vertical-align:-2px;overflow:visible"><path d="M2.98 0.82 L9.02 0.82 L9.02 3.25 L2.98 3.25 L2.98 5.68 L9.02 5.68 M0.60 8.38 L11.40 8.38 M6.00 6.65 L6.00 8.38" fill="none" stroke="#a852e4" stroke-width="1.3"/></svg> <svg width="12" height="12" style="display:inline-block;vertical-align:-2px;overflow:visible"><path d="M2.98 0.82 L9.02 0.82 M4.79 0.82 L4.79 5.68 M7.21 0.82 L7.21 5.68 M2.98 5.68 L9.02 5.68 M0.60 8.38 L11.40 8.38 M6.00 6.65 L6.00 8.38" fill="none" stroke="#a852e4" stroke-width="1.3"/></svg><svg width="12" height="12" style="display:inline-block;vertical-align:-2px;overflow:visible"><path d="M3.89 0.93 L3.89 1.63 M1.71 2.17 L6.08 2.17 M2.19 3.93 A1.70 1.23 0 1 0 5.60 3.93 A1.70 1.23 0 1 0 2.19 3.93 M9.02 0.60 L9.02 6.54 M9.02 3.57 L11.18 3.57 M2.76 7.62 L8.70 7.62 L8.70 11.18 L2.76 11.18 L2.76 7.62" fill="none" stroke="#a852e4" stroke-width="1.3"/></svg><svg width="12" height="12" style="display:inline-block;vertical-align:-2px;overflow:visible"><path d="M5.78 0.60 L1.46 0.60 L1.46 3.62 L5.78 3.62 M0.60 5.14 L7.30 5.14 M3.95 4.06 L3.95 5.14 M9.46 0.60 L9.46 7.08 M2.76 7.94 L2.76 11.18 L8.70 11.18" fill="none" stroke="#a852e4" stroke-width="1.3"/></svg> <svg width="12" height="12" style="display:inline-block;vertical-align:-2px;overflow:visible"><path d="M1.14 6.00 A2.70 3.24 0 1 0 6.54 6.00 A2.70 3.24 0 1 0 1.14 6.00 M9.02 0.60 L9.02 11.40" fill="none" stroke="#a852e4" stroke-width="1.3"/></svg><svg width="12" height="12" style="display:inline-block;vertical-align:-2px;overflow:visible"><path d="M1.14 2.76 L6.54 2.76 L6.54 9.24 L1.14 9.24 L1.14 2.76 M9.02 0.60 L9.02 11.40" fill="none" stroke="#a852e4" stroke-width="1.3"/></svg><svg width="12" height="12" style="display:inline-block;vertical-align:-2px;overflow:visible"><path d="M1.14 2.76 L6.54 2.76 M3.84 2.76 L1.14 9.24 M3.84 4.70 L6.54 9.24 M9.02 0.60 L9.02 11.40" fill="none" stroke="#a852e4" stroke-width="1.3"/></svg><svg width="12" height="12" style="display:inline-block;vertical-align:-2px;overflow:visible"><path d="M3.30 0.60 L8.70 0.60 L8.70 2.22 L3.30 2.22 L3.30 3.84 L8.70 3.84 M0.60 5.68 L11.40 5.68 M2.98 7.73 L9.02 7.73 L9.02 9.46 L2.98 9.46 L2.98 11.18 L9.02 11.18" fill="none" stroke="#a852e4" stroke-width="1.3"/></svg> <svg width="12" height="12" style="display:inline-block;vertical-align:-2px;overflow:visible"><path d="M3.84 2.76 L1.14 9.24 M3.84 4.38 L6.54 9.24 M9.02 0.60 L9.02 11.40 M9.02 6.00 L11.18 6.00" fill="none" stroke="#a852e4" stroke-width="1.3"/></svg><svg width="12" height="12" style="display:inline-block;vertical-align:-2px;overflow:visible"><path d="M3.30 2.22 A2.70 1.62 0 1 0 8.70 2.22 A2.70 1.62 0 1 0 3.30 2.22 M0.60 5.68 L11.40 5.68 M4.38 4.38 L4.38 5.68 M7.62 4.38 L7.62 5.68 M2.98 9.46 A3.02 1.73 0 1 0 9.02 9.46 A3.02 1.73 0 1 0 2.98 9.46" fill="none" stroke="#a852e4" stroke-width="1.3"/></svg><svg width="12" height="12" style="display:inline-block;vertical-align:-2px;overflow:visible"><path d="M3.89 0.93 L3.89 1.63 M1.71 2.17 L6.08 2.17 M2.19 3.93 A1.70 1.23 0 1 0 5.60 3.93 A1.70 1.23 0 1 0 2.19 3.93 M9.02 0.60 L9.02 6.54 M9.02 3.57 L11.18 3.57 M2.76 7.62 L2.76 11.18 L8.70 11.18" fill="none" stroke="#a852e4" stroke-width="1.3"/></svg><svg width="12" height="12" style="display:inline-block;vertical-align:-2px;overflow:visible"><path d="M6.54 2.76 L1.14 2.76 L1.14 9.24 L6.54 9.24 M9.02 0.60 L9.02 11.40 M9.02 6.00 L11.18 6.00" fill="none" stroke="#a852e4" stroke-width="1.3"/></svg>. */</span></div><div>      <span class="fn">GdDrawImageFromBuffer</span></div><div>                (<span class="vr">puVar4</span>[<span class="nm">0x35</span>],<span class="vr">puVar4</span>[<span class="nm">0x36</span>],*<span class="vr">puVar4</span>,<span class="vr">puVar4</span>[<span class="nm">1</span>],<span class="vr">iVar2</span>,</div><div>                 *(<span class="kw">undefined4</span> *)(<span class="gl">DAT_48221ec0</span> + <span class="nm">0x48221dce</span>),<span class="vr">iVar1</span>);</div><div>      <span class="kw">return</span> <span class="nm">0</span>;</div><div>    }</div><div>    <span class="vr">uVar3</span> = <span class="nm">0xffffffff</span>;</div><div>  }</div><div>  <span class="kw">else</span> {</div><div>                    <span class="cm">/* <svg width="12" height="12" style="display:inline-block;vertical-align:-2px;overflow:visible"><path d="M3.89 0.93 L3.89 1.63 M1.71 2.17 L6.08 2.17 M2.19 3.93 A1.70 1.23 0 1 0 5.60 3.93 A1.70 1.23 0 1 0 2.19 3.93 M9.02 0.60 L9.02 6.54 M2.76 7.62 L2.76 11.18 L8.70 11.18 L8.70 7.62 M2.76 9.22 L8.70 9.22" fill="none" stroke="#a852e4" stroke-width="1.3"/></svg> <svg width="12" height="12" style="display:inline-block;vertical-align:-2px;overflow:visible"><path d="M2.98 3.25 A3.02 2.43 0 1 0 9.02 3.25 A3.02 2.43 0 1 0 2.98 3.25 M0.60 8.38 L11.40 8.38 M6.00 6.65 L6.00 8.38" fill="none" stroke="#a852e4" stroke-width="1.3"/></svg><svg width="12" height="12" style="display:inline-block;vertical-align:-2px;overflow:visible"><path d="M1.14 2.76 L1.14 9.24 L6.54 9.24 L6.54 2.76 M1.14 5.68 L6.54 5.68 M9.02 0.60 L9.02 11.40 M6.86 6.00 L9.02 6.00" fill="none" stroke="#a852e4" stroke-width="1.3"/></svg><svg width="12" height="12" style="display:inline-block;vertical-align:-2px;overflow:visible"><path d="M3.30 0.60 L8.70 0.60 M4.92 0.60 L4.92 3.84 M7.08 0.60 L7.08 3.84 M3.30 3.84 L8.70 3.84 M0.60 5.68 L11.40 5.68 M2.98 7.73 L9.02 7.73 L9.02 9.46 L2.98 9.46 L2.98 11.18 L9.02 11.18" fill="none" stroke="#a852e4" stroke-width="1.3"/></svg><svg width="12" height="12" style="display:inline-block;vertical-align:-2px;overflow:visible"><path d="M2.98 0.82 L9.02 0.82 L9.02 3.25 L2.98 3.25 L2.98 5.68 L9.02 5.68 M0.60 8.38 L11.40 8.38 M6.00 6.65 L6.00 8.38" fill="none" stroke="#a852e4" stroke-width="1.3"/></svg><svg width="12" height="12" style="display:inline-block;vertical-align:-2px;overflow:visible"><path d="M2.98 3.25 A3.02 2.43 0 1 0 9.02 3.25 A3.02 2.43 0 1 0 2.98 3.25 M0.60 8.38 L11.40 8.38 M6.00 8.38 L6.00 10.10" fill="none" stroke="#a852e4" stroke-width="1.3"/></svg> <svg width="12" height="12" style="display:inline-block;vertical-align:-2px;overflow:visible"><path d="M3.57 0.60 L3.57 1.33 M1.14 1.68 L6.00 1.68 M3.57 1.68 L1.14 5.14 M3.57 2.76 L6.00 5.14 M0.60 7.08 L7.62 7.08 M4.11 7.08 L4.11 8.38 M9.46 0.60 L9.46 11.40" fill="none" stroke="#a852e4" stroke-width="1.3"/></svg><svg width="12" height="12" style="display:inline-block;vertical-align:-2px;overflow:visible"><path d="M1.46 3.19 A2.43 2.05 0 1 0 6.32 3.19 A2.43 2.05 0 1 0 1.46 3.19 M9.02 0.60 L9.02 6.54 M9.02 2.27 L11.18 2.27 M9.02 4.87 L11.18 4.87 M2.76 7.62 L8.70 7.62 L8.70 11.18" fill="none" stroke="#a852e4" stroke-width="1.3"/></svg><svg width="12" height="12" style="display:inline-block;vertical-align:-2px;overflow:visible"><path d="M1.46 1.14 L6.32 1.14 M3.89 1.14 L1.46 5.24 M3.89 2.37 L6.32 5.24 M9.02 0.60 L9.02 6.54 M6.86 3.57 L9.02 3.57 M2.76 7.62 L8.70 7.62 L8.70 11.18 L2.76 11.18 L2.76 7.62" fill="none" stroke="#a852e4" stroke-width="1.3"/></svg> <svg width="12" height="12" style="display:inline-block;vertical-align:-2px;overflow:visible"><path d="M9.02 0.82 L2.98 0.82 L2.98 5.68 L9.02 5.68 M2.98 3.25 L9.02 3.25 M0.60 8.38 L11.40 8.38" fill="none" stroke="#a852e4" stroke-width="1.3"/></svg><svg width="12" height="12" style="display:inline-block;vertical-align:-2px;overflow:visible"><path d="M1.14 2.76 L6.54 2.76 L6.54 6.00 L1.14 6.00 L1.14 9.24 L6.54 9.24 M9.02 0.60 L9.02 11.40" fill="none" stroke="#a852e4" stroke-width="1.3"/></svg><svg width="12" height="12" style="display:inline-block;vertical-align:-2px;overflow:visible"><path d="M1.14 2.76 L6.54 2.76 L6.54 9.24 M9.02 0.60 L9.02 11.40 M6.86 6.00 L9.02 6.00" fill="none" stroke="#a852e4" stroke-width="1.3"/></svg><svg width="12" height="12" style="display:inline-block;vertical-align:-2px;overflow:visible"><path d="M3.84 2.44 L3.84 3.54 M1.41 4.38 L6.27 4.38 M1.95 7.17 A1.89 1.94 0 1 0 5.73 7.17 A1.89 1.94 0 1 0 1.95 7.17 M9.02 0.60 L9.02 11.40 M9.02 6.00 L11.18 6.00" fill="none" stroke="#a852e4" stroke-width="1.3"/></svg><svg width="12" height="12" style="display:inline-block;vertical-align:-2px;overflow:visible"><path d="M3.30 0.60 L3.30 3.84 L8.70 3.84 M0.60 5.68 L11.40 5.68 M2.98 7.73 L2.98 11.18 L9.02 11.18" fill="none" stroke="#a852e4" stroke-width="1.3"/></svg> <svg width="12" height="12" style="display:inline-block;vertical-align:-2px;overflow:visible"><path d="M6.00 0.57 L6.00 1.40 M3.28 2.03 L8.72 2.03 M3.88 4.12 A2.12 1.46 0 1 0 8.12 4.12 A2.12 1.46 0 1 0 3.88 4.12 M0.60 8.38 L11.40 8.38" fill="none" stroke="#a852e4" stroke-width="1.3"/></svg><svg width="12" height="12" style="display:inline-block;vertical-align:-2px;overflow:visible"><path d="M3.30 0.60 L8.70 0.60 L8.70 2.22 L3.30 2.22 L3.30 3.84 L8.70 3.84 M0.60 5.68 L11.40 5.68 M2.98 7.73 L9.02 7.73 L9.02 11.18 L2.98 11.18 L2.98 7.73" fill="none" stroke="#a852e4" stroke-width="1.3"/></svg> */</span></div><div>    <span class="vr">iVar2</span> = <span class="fn">malloc</span>(<span class="nm">0x100000</span>);</div><div>    <span class="vr">piVar6</span> = *(<span class="kw">int</span> **)(<span class="vr">iVar1</span> + <span class="nm">0x48221d02</span>);</div></div>

<!-- OVERLAY -->
<div class="a" style="left:603px;top:29px;width:149px;height:25px;border:3px solid #ee1c24"></div>
<div class="a" style="left:714px;top:318px;width:299px;height:24px;border:3px solid #ee1c24"></div>
<svg class="a" style="left:0;top:0" width="1102" height="486"><line x1="463" y1="226" x2="715" y2="321.5" stroke="#ee1c24" stroke-width="3"/></svg>
</body></html>
